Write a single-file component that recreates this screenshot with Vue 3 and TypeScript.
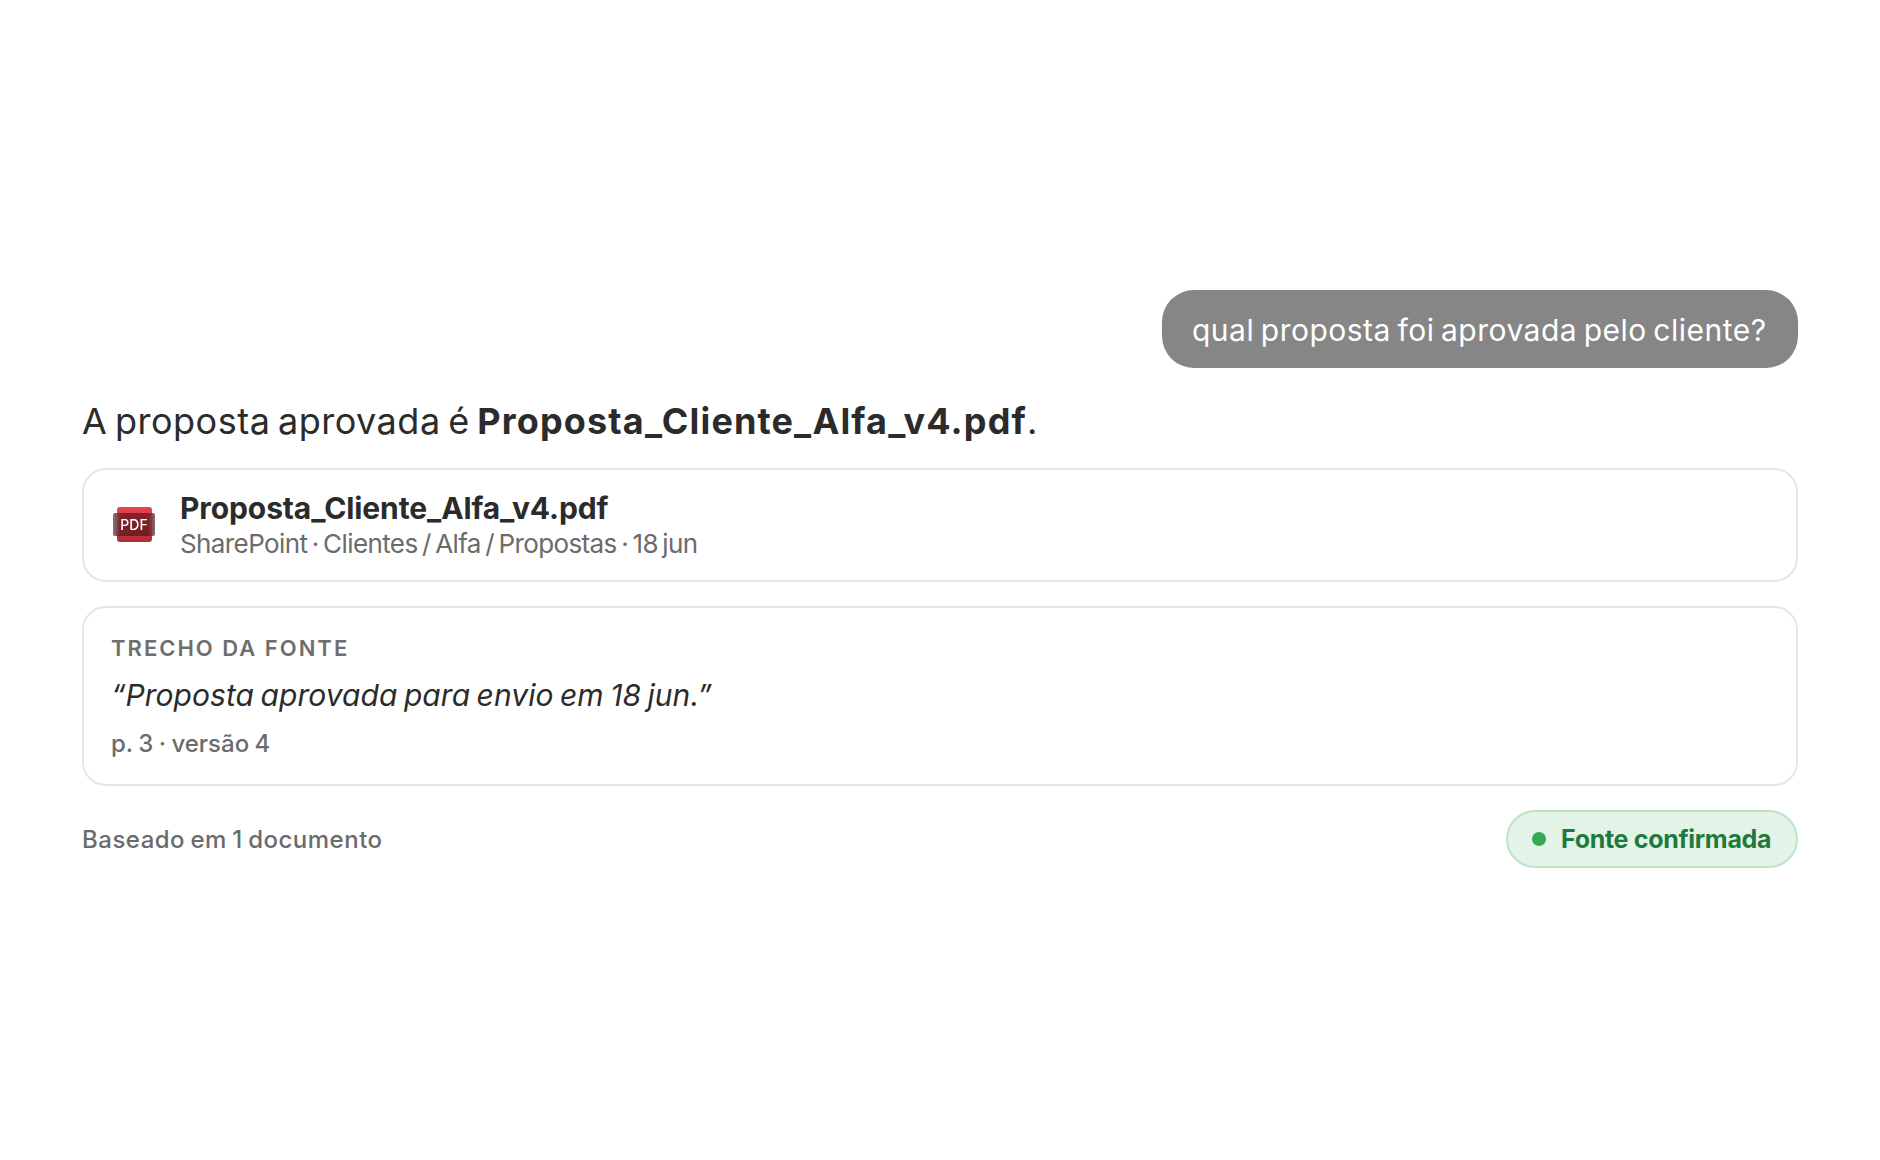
<script setup lang="ts">
const title = 'Proposta_Cliente_Alfa_v4.pdf'
</script>

<template>
  <main class="page">
    <div class="thread">
      <div class="bubble">qual proposta foi aprovada pelo cliente?</div>
      <p class="answer">A proposta aprovada é <strong>{{ title }}</strong>.</p>
      <section class="card file">
        <div class="pdf" aria-hidden="true">
          <span class="sheet"></span>
          <span class="band">PDF</span>
        </div>
        <div class="meta">
          <div class="name">{{ title }}</div>
          <div class="path">SharePoint · Clientes / Alfa / Propostas · 18 jun</div>
        </div>
      </section>
      <section class="card excerpt">
        <div class="label">TRECHO DA FONTE</div>
        <div class="quote">“Proposta aprovada para envio em 18 jun.”</div>
        <div class="page-ref">p. 3 · versão 4</div>
      </section>
      <footer class="foot">
        <span class="based">Baseado em 1 documento</span>
        <span class="pill"><i class="dot"></i>Fonte confirmada</span>
      </footer>
    </div>
  </main>
</template>

<style>
html, body { margin: 0; background: #fff; }
</style>

<style scoped>
.page {
  width: 1880px;
  height: 1160px;
  box-sizing: border-box;
  padding: 290px 82px 0;
  font-family: Inter, "Noto Sans", sans-serif;
  color: #2b2b2b;
}
.thread { display: flex; flex-direction: column; }
.bubble {
  align-self: flex-end;
  box-sizing: border-box;
  width: 636px;
  height: 78px;
  padding: 0 30px;
  border-radius: 32px;
  background: #868686;
  color: #fff;
  font-size: 30px;
  letter-spacing: 0.5px;
  word-spacing: -2.4px;
  line-height: 80px;
  white-space: nowrap;
}
.answer {
  margin: 29px 0 23px;
  font-size: 36px;
  line-height: 48px;
  letter-spacing: 0.5px;
  word-spacing: -3px;
}
.answer strong { font-weight: 700; letter-spacing: 1.15px; }
.card {
  box-sizing: border-box;
  border: 2px solid #e6e6ea;
  border-radius: 24px;
  background: #fff;
}
.file {
  height: 114px;
  display: flex;
  align-items: center;
  gap: 25px;
  padding: 0 29px;
}
.pdf {
  position: relative;
  width: 42px;
  height: 35px;
  flex: none;
  margin-top: -2px;
}
.sheet {
  position: absolute;
  left: 4px;
  right: 3px;
  top: 0;
  bottom: 0;
  border-radius: 3px;
  background: linear-gradient(#ee404c, #b32c38);
}
.band {
  position: absolute;
  left: 0;
  right: 0;
  top: 6px;
  bottom: 6px;
  border-radius: 2px;
  background: rgba(70, 20, 25, 0.62);
  backdrop-filter: blur(2px);
  color: #fff;
  font-size: 14px;
  font-weight: 500;
  line-height: 23px;
  text-align: center;
}
.meta { display: flex; flex-direction: column; }
.name {
  font-size: 30px;
  font-weight: 700;
  line-height: 38px;
  letter-spacing: -0.1px;
}
.path {
  font-size: 26px;
  line-height: 34px;
  letter-spacing: -0.6px;
  word-spacing: -2.3px;
  color: #6b6b6b;
}
.excerpt {
  margin-top: 24px;
  height: 180px;
  padding: 26px 27px;
}
.label {
  font-size: 22px;
  line-height: 28px;
  font-weight: 600;
  letter-spacing: 2px;
  color: #6e6e6e;
}
.quote {
  margin-top: 13px;
  font-size: 30px;
  line-height: 40px;
  font-style: italic;
  letter-spacing: 0.05px;
  word-spacing: -2px;
}
.page-ref {
  margin-top: 13px;
  font-size: 24px;
  line-height: 32px;
  font-weight: 500;
  letter-spacing: 0px;
  word-spacing: -1px;
  color: #6b6b6b;
}
.foot {
  margin-top: 24px;
  display: flex;
  align-items: center;
  justify-content: space-between;
}
.based {
  font-size: 24px;
  letter-spacing: 0.5px;
  word-spacing: -1.5px;
  font-weight: 500;
  color: #6b6b6b;
}
.pill {
  box-sizing: border-box;
  width: 292px;
  height: 58px;
  display: flex;
  align-items: center;
  gap: 15px;
  padding: 0 24px;
  border: 2px solid #bfe3c9;
  border-radius: 29px;
  background: #e3f3e8;
  color: #1e7a3c;
  font-size: 25px;
  font-weight: 700;
  letter-spacing: -0.3px;
  white-space: nowrap;
}
.dot {
  width: 14px;
  height: 14px;
  border-radius: 50%;
  background: #34a853;
  flex: none;
}
</style>
